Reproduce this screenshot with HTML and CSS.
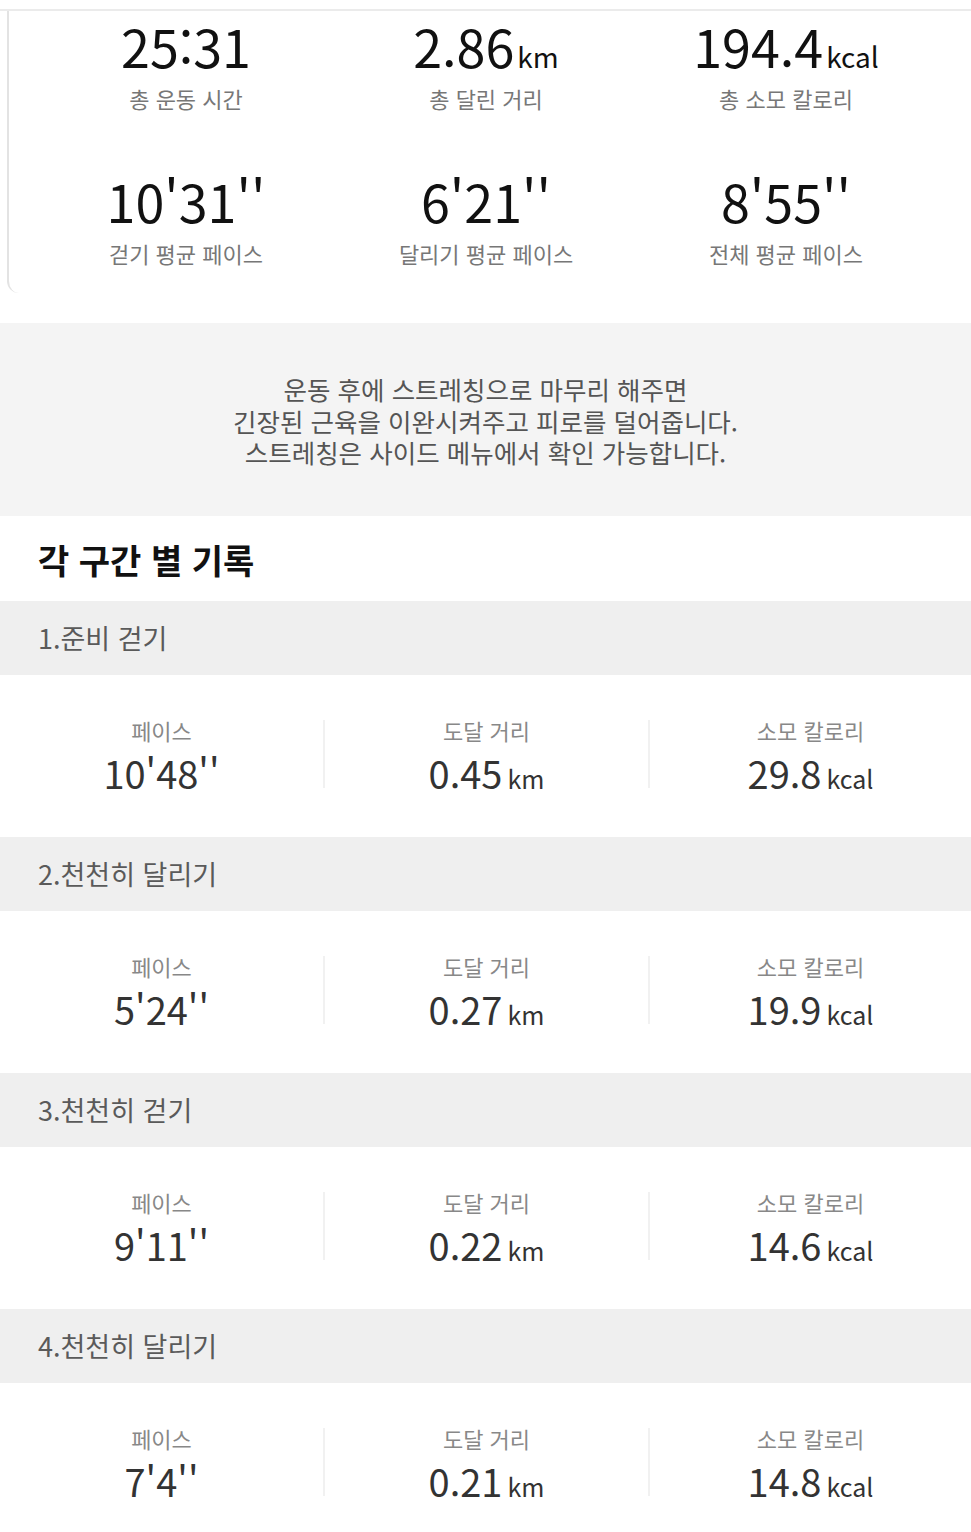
FILE: index.html
```html
<!DOCTYPE html>
<html lang="ko">
<head>
    <meta charset="UTF-8">
    <meta name="viewport" content="width=device-width, initial-scale=1.0">
    <title>운동 기록</title>
    <link rel="stylesheet" href="styles.css">
</head>
<body>
    <div class="summary">
        <div class="summary-rule"></div>
        <div class="stats">
            <div class="stat">
                <div class="stat-value">25:31</div>
                <div class="stat-label">총 운동 시간</div>
            </div>
            <div class="stat">
                <div class="stat-value">2.86<span class="unit">km</span></div>
                <div class="stat-label">총 달린 거리</div>
            </div>
            <div class="stat">
                <div class="stat-value">194.4<span class="unit">kcal</span></div>
                <div class="stat-label">총 소모 칼로리</div>
            </div>
            <div class="stat">
                <div class="stat-value">10'31''</div>
                <div class="stat-label">걷기 평균 페이스</div>
            </div>
            <div class="stat">
                <div class="stat-value">6'21''</div>
                <div class="stat-label">달리기 평균 페이스</div>
            </div>
            <div class="stat">
                <div class="stat-value">8'55''</div>
                <div class="stat-label">전체 평균 페이스</div>
            </div>
        </div>
    </div>

    <div class="notice">
        <p class="notice-line">운동 후에 스트레칭으로 마무리 해주면</p>
        <p class="notice-line">긴장된 근육을 이완시켜주고 피로를 덜어줍니다.</p>
        <p class="notice-line">스트레칭은 사이드 메뉴에서 확인 가능합니다.</p>
    </div>

    <h2 class="section-title">각 구간 별 기록</h2>

    <div class="laps">
        <div class="lap">
            <div class="lap-head">1.준비 걷기</div>
            <div class="lap-body">
                <div class="lap-item">
                    <div class="lap-label">페이스</div>
                    <div class="lap-value">10'48''</div>
                </div>
                <div class="lap-item">
                    <div class="lap-label">도달 거리</div>
                    <div class="lap-value">0.45<span class="unit">km</span></div>
                </div>
                <div class="lap-item">
                    <div class="lap-label">소모 칼로리</div>
                    <div class="lap-value">29.8<span class="unit">kcal</span></div>
                </div>
            </div>
        </div>
        <div class="lap">
            <div class="lap-head">2.천천히 달리기</div>
            <div class="lap-body">
                <div class="lap-item">
                    <div class="lap-label">페이스</div>
                    <div class="lap-value">5'24''</div>
                </div>
                <div class="lap-item">
                    <div class="lap-label">도달 거리</div>
                    <div class="lap-value">0.27<span class="unit">km</span></div>
                </div>
                <div class="lap-item">
                    <div class="lap-label">소모 칼로리</div>
                    <div class="lap-value">19.9<span class="unit">kcal</span></div>
                </div>
            </div>
        </div>
        <div class="lap">
            <div class="lap-head">3.천천히 걷기</div>
            <div class="lap-body">
                <div class="lap-item">
                    <div class="lap-label">페이스</div>
                    <div class="lap-value">9'11''</div>
                </div>
                <div class="lap-item">
                    <div class="lap-label">도달 거리</div>
                    <div class="lap-value">0.22<span class="unit">km</span></div>
                </div>
                <div class="lap-item">
                    <div class="lap-label">소모 칼로리</div>
                    <div class="lap-value">14.6<span class="unit">kcal</span></div>
                </div>
            </div>
        </div>
        <div class="lap">
            <div class="lap-head">4.천천히 달리기</div>
            <div class="lap-body">
                <div class="lap-item">
                    <div class="lap-label">페이스</div>
                    <div class="lap-value">7'4''</div>
                </div>
                <div class="lap-item">
                    <div class="lap-label">도달 거리</div>
                    <div class="lap-value">0.21<span class="unit">km</span></div>
                </div>
                <div class="lap-item">
                    <div class="lap-label">소모 칼로리</div>
                    <div class="lap-value">14.8<span class="unit">kcal</span></div>
                </div>
            </div>
        </div>
    </div>
</body>
</html>
```

FILE: styles.css
```css
* {
    margin: 0;
    padding: 0;
    box-sizing: border-box;
    font-family: "Noto Sans CJK KR", "Noto Sans", sans-serif;
}
body {
    background: #fff;
    color: #222;
    width: 971px;
    overflow: hidden;
}
.unit {
    line-height: 1;
}
.summary {
    margin-left: 7px;
    border-left: 2px solid #e3e3e3;
    border-bottom-left-radius: 12px;
    padding-bottom: 25px;
}
.summary-rule {
    height: 2px;
    background: #ebebeb;
    margin: 9px 0 0 -9px;
}
.stats {
    display: grid;
    grid-template-columns: repeat(3, 300px);
    row-gap: 58px;
    padding: 5px 0 0 27px;
}
.stat {
    display: flex;
    flex-direction: column;
    align-items: center;
    gap: 7px;
}
.stat-value {
    font-size: 52px;
    line-height: 60px;
    color: #111;
}
.stat-value .unit {
    font-size: 28px;
    margin-left: 3px;
}
.stat-label {
    font-size: 22px;
    line-height: 30px;
    color: #777;
}
.notice {
    margin-top: 30px;
    background: #f4f4f4;
    padding: 50px 0 48px;
    text-align: center;
}
.notice-line {
    height: 31.5px;
    font-size: 25.5px;
    line-height: 31.5px;
    color: #555;
}
.section-title {
    font-size: 34px;
    font-weight: 700;
    line-height: 40px;
    color: #111;
    padding: 24px 38px 21px;
}
.lap-head {
    height: 74px;
    display: flex;
    align-items: center;
    padding-left: 38px;
    background: #efefef;
    font-size: 27px;
    color: #5a5a5a;
}
.lap-body {
    height: 162px;
    display: grid;
    grid-template-columns: 323px 325px 1fr;
    align-items: start;
    padding-top: 45px;
}
.lap-item {
    height: 68px;
    display: flex;
    flex-direction: column;
    align-items: center;
    gap: 13px;
}
.lap-item + .lap-item {
    border-left: 2px solid #f1f1f1;
}
.lap-label {
    font-size: 22px;
    line-height: 20px;
    color: #888;
}
.lap-value {
    font-size: 38px;
    line-height: 40px;
    color: #333;
}
.lap-value .unit {
    font-size: 25px;
    margin-left: 5px;
}
```
